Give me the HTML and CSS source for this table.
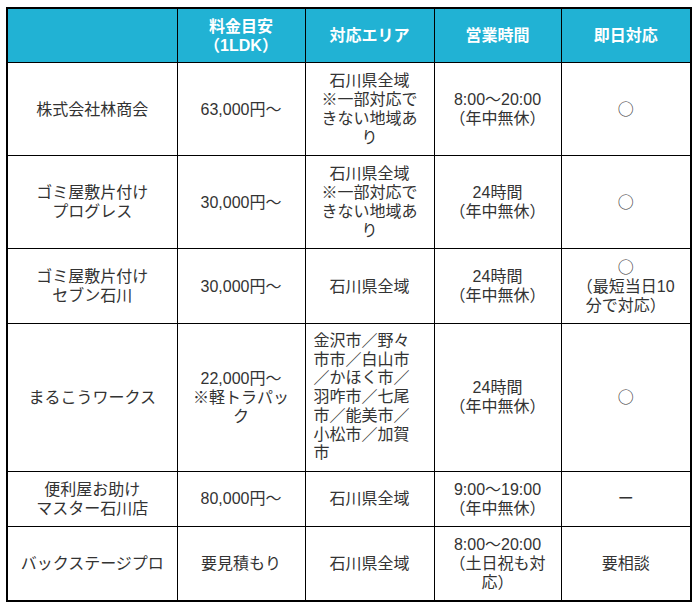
FILE: index.html
```html
<!DOCTYPE html>
<html lang="ja">
<head>
<meta charset="utf-8">
<title>比較表</title>
<link rel="stylesheet" href="styles.css">
</head>
<body>
<table class="compare">
  <colgroup>
    <col class="c1"><col class="c2"><col class="c3"><col class="c4"><col class="c5">
  </colgroup>
  <thead>
    <tr>
      <th></th>
      <th>料金目安<br>（1LDK）</th>
      <th>対応エリア</th>
      <th>営業時間</th>
      <th>即日対応</th>
    </tr>
  </thead>
  <tbody>
    <tr>
      <td>株式会社林商会</td>
      <td>63,000円〜</td>
      <td>石川県全域<br>※一部対応で<br>きない地域あ<br>り</td>
      <td>8:00〜20:00<br>（年中無休）</td>
      <td><span class="mark">○</span></td>
    </tr>
    <tr>
      <td>ゴミ屋敷片付け<br>プログレス</td>
      <td>30,000円〜</td>
      <td>石川県全域<br>※一部対応で<br>きない地域あ<br>り</td>
      <td>24時間<br>（年中無休）</td>
      <td><span class="mark">○</span></td>
    </tr>
    <tr>
      <td>ゴミ屋敷片付け<br>セブン石川</td>
      <td>30,000円〜</td>
      <td>石川県全域</td>
      <td>24時間<br>（年中無休）</td>
      <td><span class="mark">○</span><br>（最短当日10<br>分で対応）</td>
    </tr>
    <tr>
      <td>まるこうワークス</td>
      <td>22,000円〜<br>※軽トラパッ<br>ク</td>
      <td class="left">金沢市／野々<br>市市／白山市<br>／かほく市／<br>羽咋市／七尾<br>市／能美市／<br>小松市／加賀<br>市</td>
      <td>24時間<br>（年中無休）</td>
      <td><span class="mark">○</span></td>
    </tr>
    <tr>
      <td>便利屋お助け<br>マスター石川店</td>
      <td>80,000円〜</td>
      <td>石川県全域</td>
      <td>9:00〜19:00<br>（年中無休）</td>
      <td>ー</td>
    </tr>
    <tr>
      <td>バックステージプロ</td>
      <td>要見積もり</td>
      <td>石川県全域</td>
      <td>8:00〜20:00<br>（土日祝も対<br>応）</td>
      <td>要相談</td>
    </tr>
  </tbody>
</table>
</body>
</html>
```

FILE: styles.css
```css
html, body {
  margin: 0;
  padding: 0;
  background: #ffffff;
}

body {
  padding: 7px 0 0 6px;
  font-family: "Liberation Sans", "Noto Sans CJK JP", sans-serif;
  font-size: 16px;
  line-height: 19px;
  color: #333333;
}

.compare {
  border-collapse: collapse;
  table-layout: fixed;
  width: 684px;
  border: 2px solid #000000;
}

.c1 { width: 170px; }
.c2 { width: 128px; }
.c3 { width: 129px; }
.c4 { width: 127px; }
.c5 { width: 130px; }

.compare th,
.compare td {
  border: 1px solid #000000;
  padding: 8px;
  text-align: center;
  vertical-align: middle;
  white-space: nowrap;
}

.compare th {
  padding: 7.5px 8px;
  background: #21b2d4;
  color: #ffffff;
  font-weight: bold;
}

.compare td.left {
  text-align: left;
  line-height: 18.7px;
}

.mark {
  font-family: "Noto Sans CJK JP", sans-serif;
}
```
